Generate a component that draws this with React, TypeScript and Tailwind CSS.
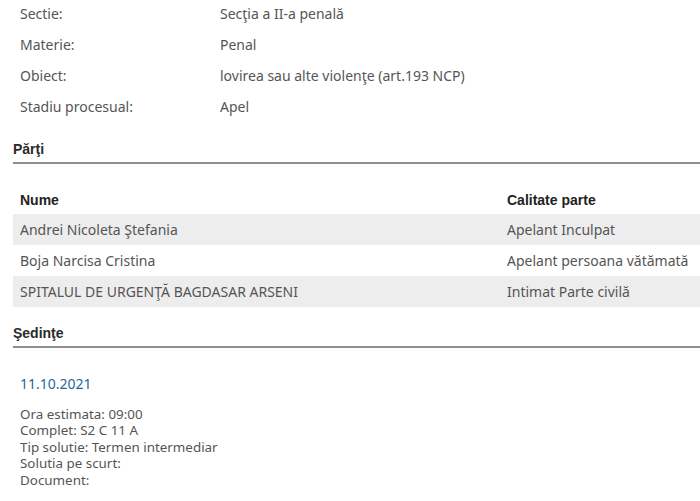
import React from 'react';

const details = [
  { label: 'Sectie:', value: 'Secţia a II-a penală' },
  { label: 'Materie:', value: 'Penal' },
  { label: 'Obiect:', value: 'lovirea sau alte violenţe (art.193 NCP)' },
  { label: 'Stadiu procesual:', value: 'Apel' },
];

const parti = [
  { nume: 'Andrei Nicoleta Ştefania', calitate: 'Apelant Inculpat' },
  { nume: 'Boja Narcisa Cristina', calitate: 'Apelant persoana vătămată' },
  { nume: 'SPITALUL DE URGENŢĂ BAGDASAR ARSENI', calitate: 'Intimat Parte civilă' },
];

const sedinta = [
  'Ora estimata: 09:00',
  'Complet: S2 C 11 A',
  'Tip solutie: Termen intermediar',
  'Solutia pe scurt:',
  'Document:',
];

const SectionTitle = ({ title }: { title: string }) => (
  <div className="ml-[13px] border-b-2 border-[#8f8f8f] pb-[3px]">
    <h3 className="text-[14px] font-bold leading-[20px] text-[#2b2b2b] font-['Liberation_Sans',sans-serif]">
      {title}
    </h3>
  </div>
);

export default function App() {
  return (
    <div className="w-[700px] h-[501px] overflow-hidden bg-white font-['Noto_Sans',sans-serif] text-[14px] text-[#555555]">
      <div className="mt-[-2px]">
        {details.map((d) => (
          <div key={d.label} className="flex items-center h-[31px]">
            <span className="w-[220px] pl-[20px]">{d.label}</span>
            <span>{d.value}</span>
          </div>
        ))}
      </div>

      <div className="mt-[17px]">
        <SectionTitle title="Părţi" />
      </div>

      <div className="ml-[13px] mt-[22px]">
        <div className="flex items-center h-[28px] font-bold text-[14px] text-[#222222] font-['Liberation_Sans',sans-serif]">
          <span className="w-[494px] pl-[7px]">Nume</span>
          <span>Calitate parte</span>
        </div>
        {parti.map((p, i) => (
          <div
            key={p.nume}
            className={`flex items-center h-[31px] ${i % 2 === 0 ? 'bg-[#ededed]' : 'bg-white'}`}
          >
            <span className="w-[494px] pl-[7px]">{p.nume}</span>
            <span>{p.calitate}</span>
          </div>
        ))}
      </div>

      <div className="mt-[16px]">
        <SectionTitle title="Şedinţe" />
      </div>

      <div className="pl-[20px] pt-[26px]">
        <div className="text-[#2a6796] leading-[20px]">11.10.2021</div>
        <div className="mt-[12px] text-[13.4px] leading-[16.4px]">
          {sedinta.map((s) => (
            <div key={s}>{s}</div>
          ))}
        </div>
      </div>
    </div>
  );
}
